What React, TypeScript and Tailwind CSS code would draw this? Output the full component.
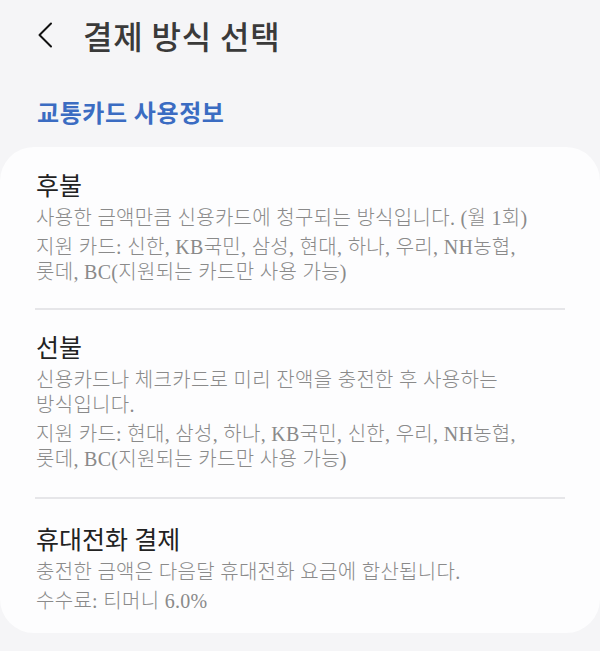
import React from "react";

const body = { fontFamily: '"Liberation Serif", "Noto Sans CJK KR", serif' };
const kr = { fontFamily: '"Noto Sans CJK KR", "Noto Sans", sans-serif' };

function Item({ title, paras }: { title: string; paras: React.ReactNode[] }) {
  return (
    <div className="px-[36px]">
      <div className="text-[25px] leading-[30px] text-[#222222]" style={body}>
        {title}
      </div>
      <div className="mt-[4px] flex flex-col gap-[4px]">
        {paras.map((p, i) => (
          <p key={i} className="text-[20px] leading-[25px] font-light tracking-[0.3px] text-[#8a8a8a] break-keep whitespace-nowrap" style={body}>
            {p}
          </p>
        ))}
      </div>
    </div>
  );
}

export default function App() {
  return (
    <div className="w-[600px] h-[651px] bg-[#f5f5f7] overflow-hidden">
      <div className="h-[70px] flex items-center pl-[37px]">
        <svg width="16" height="26" viewBox="0 0 16 26" fill="none">
          <path d="M14 1.5 L2.5 13 L14 24.5" stroke="#111" strokeWidth="2" strokeLinecap="round" strokeLinejoin="round" />
        </svg>
        <div className="ml-[30px] text-[32px] leading-[40px] font-medium tracking-[0.8px] text-[#3a3a3a]" style={kr}>
          결제 방식 선택
        </div>
      </div>
      <div className="mt-[27px] pl-[37px] text-[24px] leading-[30px] font-semibold tracking-[0.6px] text-[#3b6cc2]" style={kr}>
        교통카드 사용정보
      </div>
      <div className="mt-[20px] bg-[#fdfdfe] rounded-[34px] pt-[25px] pb-[19px]">
        <Item
          title="후불"
          paras={[
            "사용한 금액만큼 신용카드에 청구되는 방식입니다. (월 1회)",
            <>
              지원 카드: 신한, KB국민, 삼성, 현대, 하나, 우리, NH농협,
              <br />
              롯데, BC(지원되는 카드만 사용 가능)
            </>,
          ]}
        />
        <div className="mx-[35px] mt-[23px] mb-[24px] h-[2px] bg-[#e6e6e9]" />
        <Item
          title="선불"
          paras={[
            <>
              신용카드나 체크카드로 미리 잔액을 충전한 후 사용하는
              <br />
              방식입니다.
            </>,
            <>
              지원 카드: 현대, 삼성, 하나, KB국민, 신한, 우리, NH농협,
              <br />
              롯데, BC(지원되는 카드만 사용 가능)
            </>,
          ]}
        />
        <div className="mx-[35px] mt-[25px] mb-[27px] h-[2px] bg-[#e6e6e9]" />
        <Item
          title="휴대전화 결제"
          paras={["충전한 금액은 다음달 휴대전화 요금에 합산됩니다.", "수수료: 티머니 6.0%"]}
        />
      </div>
    </div>
  );
}
